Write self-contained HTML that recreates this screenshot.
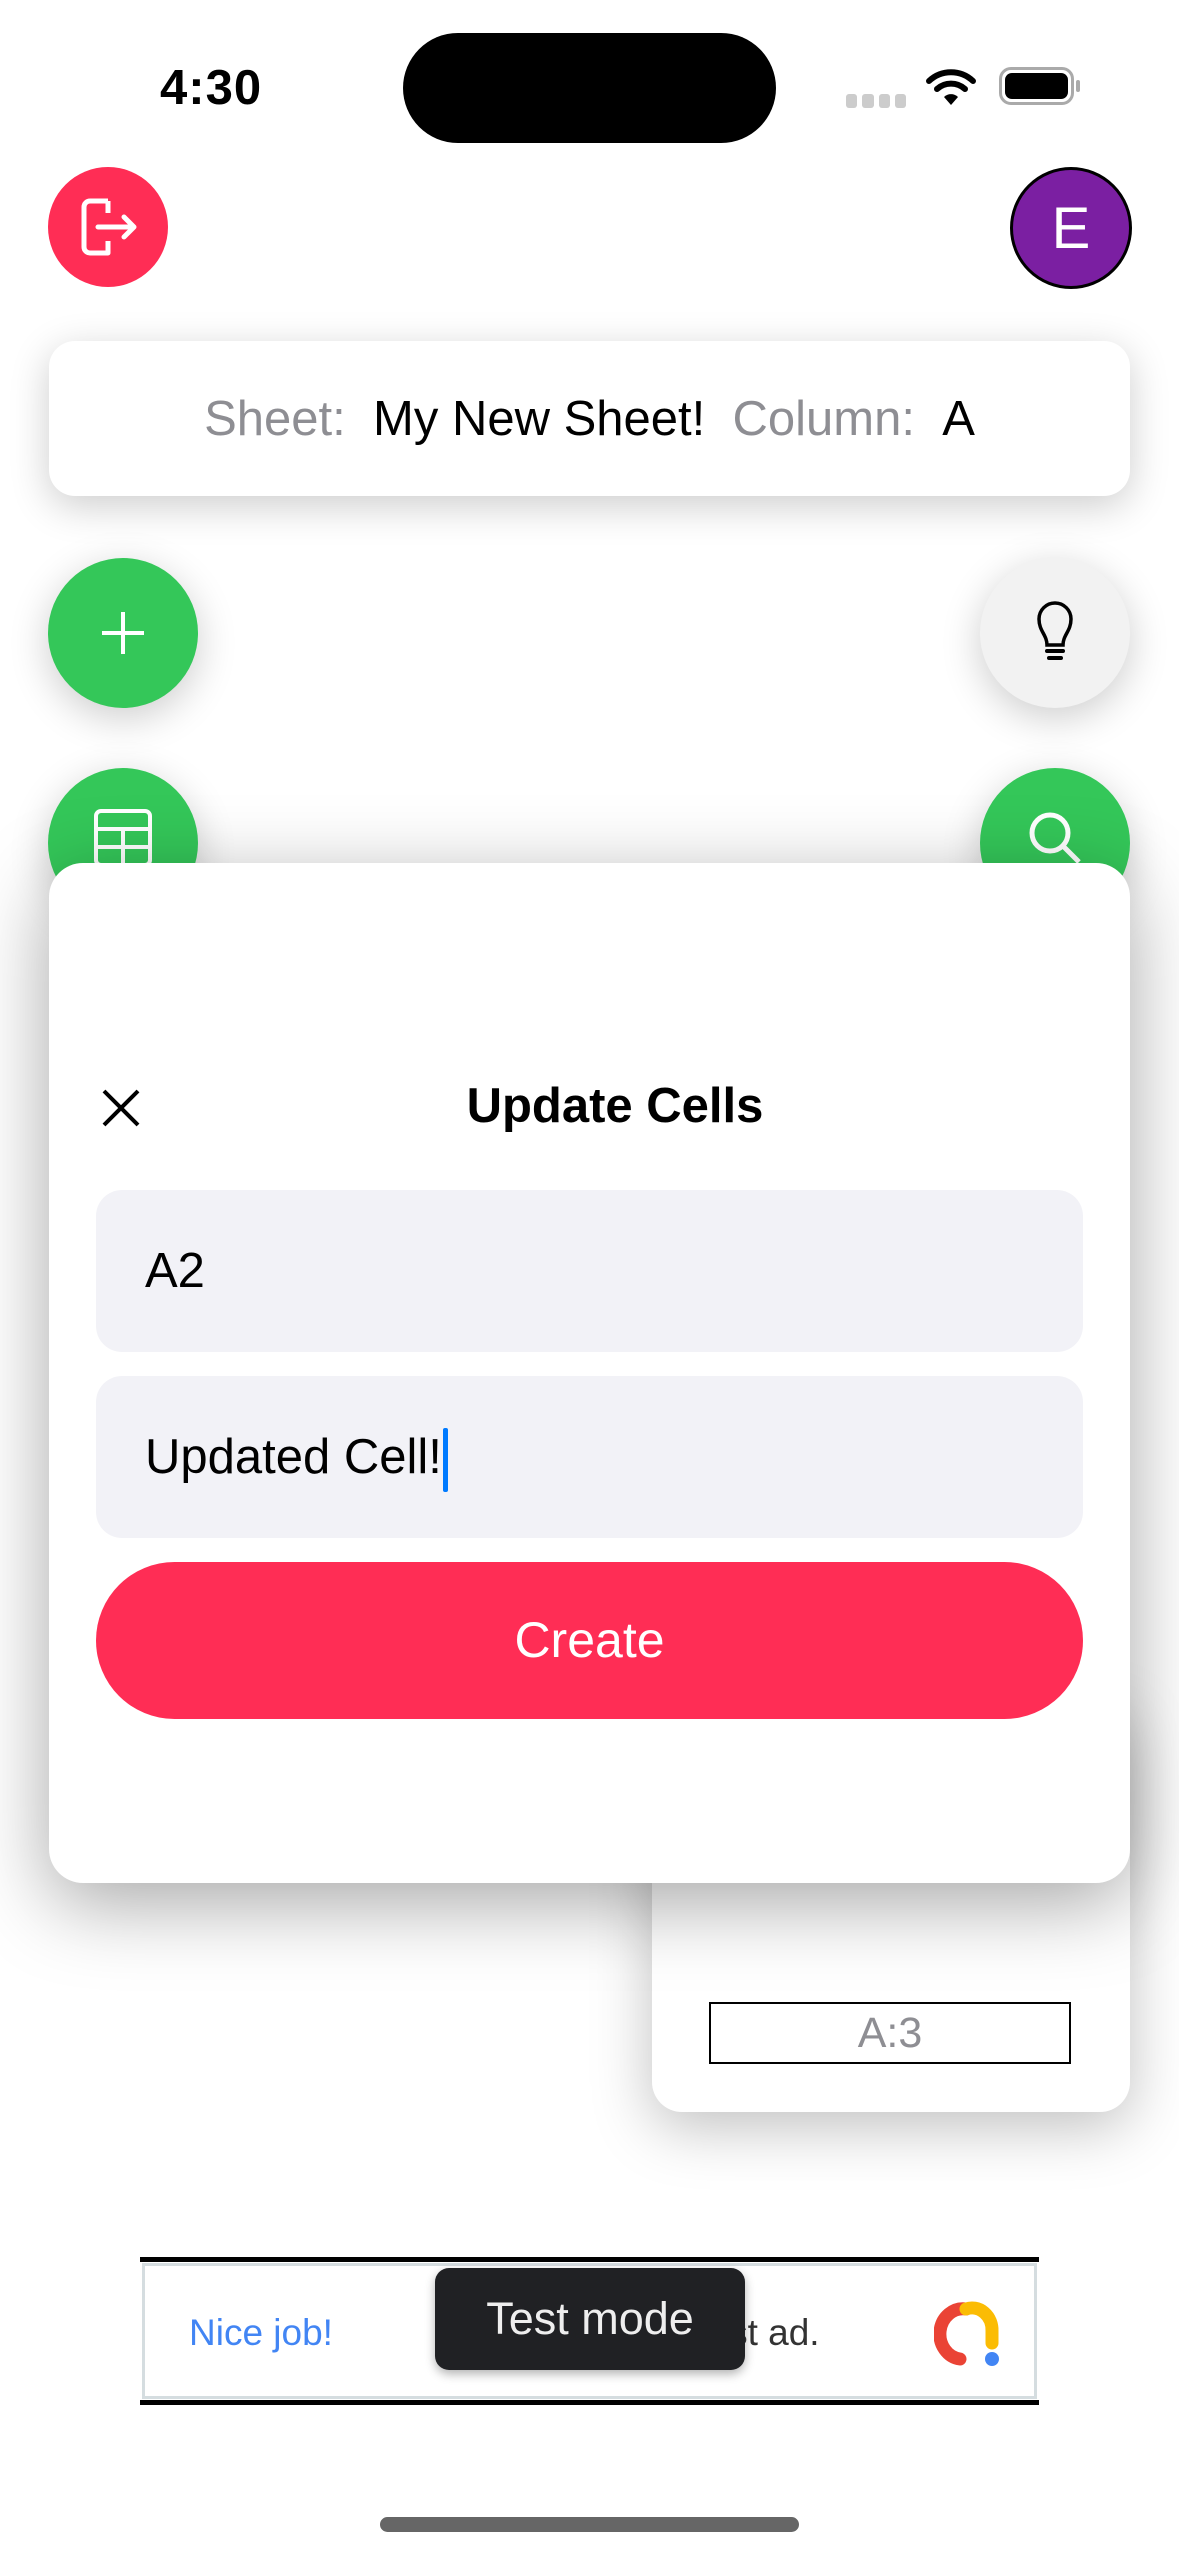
<!DOCTYPE html>
<html><head><meta charset="utf-8"><style>
*{margin:0;padding:0;box-sizing:border-box}
body{width:1179px;height:2556px;background:#fff;position:relative;overflow:hidden;font-family:"Liberation Sans",sans-serif}
.a{position:absolute}
.circ{border-radius:50%;display:flex;align-items:center;justify-content:center}
</style></head><body>
<div class="a" style="left:160px;top:60px;font-size:49px;font-weight:bold;color:#000;letter-spacing:1px">4:30</div>
<div class="a" style="left:403px;top:33px;width:373px;height:110px;border-radius:55px;background:#000"></div>
<div class="a" style="left:846px;top:94px;width:60px;height:14px;display:flex;gap:5px"><i style="flex:1;background:#ccc;border-radius:3px"></i><i style="flex:1;background:#ccc;border-radius:3px"></i><i style="flex:1;background:#ccc;border-radius:3px"></i><i style="flex:1;background:#ccc;border-radius:3px"></i></div>
<svg class="a" style="left:926px;top:68px" width="50" height="40" viewBox="0 0 50 40"><path d="M3 13 A32 32 0 0 1 47 13" stroke="#000" stroke-width="6" fill="none" stroke-linecap="round"/><path d="M11 21 A21 21 0 0 1 39 21" stroke="#000" stroke-width="6" fill="none" stroke-linecap="round"/><path d="M18 29 L25 37 L32 29 A10 10 0 0 0 18 29Z" fill="#000"/></svg>
<div class="a" style="left:999px;top:67px;width:75px;height:38px;border:3px solid #aaa;border-radius:12px;padding:3px"><div style="width:100%;height:100%;background:#000;border-radius:7px"></div></div>
<div class="a" style="left:1076px;top:80px;width:4px;height:12px;background:#aaa;border-radius:2px"></div>

<div class="a circ" style="left:48px;top:167px;width:120px;height:120px;background:#FF2D55">
<svg width="80" height="80" viewBox="0 0 80 80"><path d="M40 14 H22 a6 6 0 0 0 -6 6 V60 a6 6 0 0 0 6 6 H40 V54 M40 26 V14" stroke="#fff" stroke-width="5" fill="none" stroke-linejoin="round"/><path d="M30 40 H66 M56 30 L66 40 L56 50" stroke="#fff" stroke-width="5" fill="none" stroke-linecap="round" stroke-linejoin="round"/></svg></div>
<div class="a circ" style="left:1010px;top:167px;width:122px;height:122px;background:#7B1FA2;border:3px solid #000;color:#fff;font-size:58px">E</div>

<div class="a" style="left:49px;top:341px;width:1081px;height:155px;background:#fff;border-radius:26px;box-shadow:0 10px 40px rgba(0,0,0,.2);display:flex;align-items:center;justify-content:center;font-size:49px;white-space:pre"><span style="color:#8e8e93">Sheet:  </span><span>My New Sheet!  </span><span style="color:#8e8e93">Column:  </span><span>A</span></div>

<div class="a circ" style="left:48px;top:558px;width:150px;height:150px;background:#34C759;box-shadow:0 10px 40px rgba(0,0,0,.2)"><svg width="50" height="50"><path d="M25 4V46M4 25H46" stroke="#fff" stroke-width="4"/></svg></div>
<div class="a circ" style="left:980px;top:558px;width:150px;height:150px;background:#f2f2f2;box-shadow:0 10px 40px rgba(0,0,0,.2)"><svg width="40" height="64" viewBox="0 0 40 64"><path d="M12 44 C12 34 4 30 4 18 A16 16 0 0 1 36 18 C36 30 28 34 28 44 Z" stroke="#000" stroke-width="3.5" fill="none"/><path d="M12 50H28M14 57H26" stroke="#000" stroke-width="4" stroke-linecap="round"/></svg></div>
<div class="a circ" style="left:48px;top:768px;width:150px;height:150px;background:#34C759;box-shadow:0 10px 40px rgba(0,0,0,.2)"><svg width="60" height="60" style="margin-top:-10px"><rect x="3" y="3" width="54" height="54" rx="5" stroke="#fff" stroke-width="4" fill="none"/><path d="M3 21H57M3 39H57M30 21V57" stroke="#fff" stroke-width="4"/></svg></div>
<div class="a circ" style="left:980px;top:768px;width:150px;height:150px;background:#34C759;box-shadow:0 10px 40px rgba(0,0,0,.2)"><svg width="60" height="60" style="margin-top:-10px"><circle cx="25" cy="25" r="18" stroke="#fff" stroke-width="5" fill="none"/><path d="M38 38L54 54" stroke="#fff" stroke-width="5"/></svg></div>

<div class="a" style="left:652px;top:1700px;width:478px;height:412px;background:#fff;border-radius:30px;box-shadow:0 15px 60px rgba(0,0,0,.25)"></div>
<div class="a" style="left:709px;top:2002px;width:362px;height:62px;border:2px solid #000;color:#8e8e93;font-size:43px;text-align:center;line-height:58px">A:3</div>

<div class="a" style="left:49px;top:863px;width:1081px;height:1020px;background:#fff;border-radius:34px;box-shadow:0 20px 80px rgba(0,0,0,.35)"></div>
<svg class="a" style="left:101px;top:1088px" width="40" height="40"><path d="M3 3L37 37M37 3L3 37" stroke="#000" stroke-width="4"/></svg>
<div class="a" style="left:300px;top:1078px;width:630px;text-align:center;font-size:49px;font-weight:bold">Update Cells</div>
<div class="a" style="left:96px;top:1190px;width:987px;height:162px;background:#F2F2F7;border-radius:26px;font-size:49px;line-height:162px;padding-left:49px">A2</div>
<div class="a" style="left:96px;top:1376px;width:987px;height:162px;background:#F2F2F7;border-radius:26px;font-size:49px;line-height:162px;padding-left:49px">Updated Cell!<span style="display:inline-block;width:5px;height:64px;background:#007AFF;vertical-align:middle;border-radius:2px;margin-left:1px"></span></div>
<div class="a" style="left:96px;top:1562px;width:987px;height:157px;background:#FF2D55;border-radius:80px;color:#fff;font-size:50px;text-align:center;line-height:157px">Create</div>

<div class="a" style="left:140px;top:2257px;width:899px;height:148px;border-top:5px solid #000;border-bottom:5px solid #000"></div>
<div class="a" style="left:142px;top:2263px;width:895px;height:136px;border:3px solid #d5dde0"></div>
<div class="a" style="left:189px;top:2312px;font-size:37px;color:#4285F4">Nice job!</div>
<div class="a" style="left:690px;top:2312px;font-size:37px;color:#333">Test ad.</div>
<svg class="a" style="left:934px;top:2299px" width="70" height="70" viewBox="0 0 70 70"><path d="M26 60 A22 24 0 0 1 32 10" stroke="#EA4335" stroke-width="13" fill="none" stroke-linecap="round"/><path d="M32 10 A20 22 0 0 1 58 32 V44" stroke="#FBBC04" stroke-width="13" fill="none" stroke-linecap="round"/><circle cx="58" cy="60" r="7" fill="#4285F4"/></svg>
<div class="a" style="left:435px;top:2268px;width:310px;height:102px;background:#202124;border-radius:14px;color:#eee;font-size:45px;text-align:center;line-height:102px;box-shadow:0 4px 10px rgba(0,0,0,.3)">Test mode</div>

<div class="a" style="left:380px;top:2517px;width:419px;height:15px;background:#666;border-radius:8px"></div>
</body></html>
